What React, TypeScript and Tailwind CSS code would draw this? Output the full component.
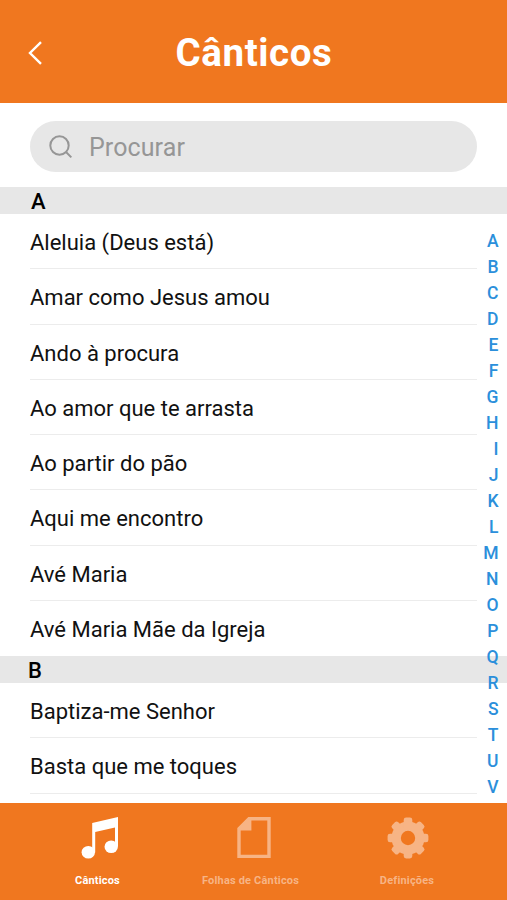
import clsx from 'clsx'

const sections = [
  {
    letter: 'A',
    offset: 'pl-[31px]',
    songs: [
      'Aleluia (Deus está)',
      'Amar como Jesus amou',
      'Ando à procura',
      'Ao amor que te arrasta',
      'Ao partir do pão',
      'Aqui me encontro',
      'Avé Maria',
      'Avé Maria Mãe da Igreja',
    ],
  },
  { letter: 'B', offset: 'pl-[28px]', songs: ['Baptiza-me Senhor', 'Basta que me toques', ''] },
]

const letters = 'ABCDEFGHIJKLMNOPQRSTUV'.split('')

function NotesIcon() {
  return (
    <svg width="38" height="42" viewBox="0 0 38 42" fill="currentColor">
      <path d="M11.2 6 37 0v29.5h-3V10.6L14.2 15V35.5h-3Z" />
      <ellipse cx="7.3" cy="35.2" rx="6.7" ry="6.3" />
      <ellipse cx="30.2" cy="29.7" rx="6.7" ry="6.3" />
    </svg>
  )
}

function SheetIcon() {
  return (
    <svg width="34" height="42" viewBox="0 0 34 42">
      <path d="M12 1.8H32V39.4H2V11.6Z" fill="none" stroke="currentColor" strokeWidth="3.4" />
      <path d="M11.4 1.6H14.4V13.4H1.8V11Z" fill="currentColor" />
    </svg>
  )
}

function GearIcon() {
  return (
    <svg width="42" height="42" viewBox="-21 -21 42 42" fill="currentColor">
      <mask id="hub">
        <rect x="-21" y="-21" width="42" height="42" fill="#fff" />
        <circle r="7.2" fill="#000" />
      </mask>
      <g mask="url(#hub)">
        <circle r="16.6" />
        {[0, 45, 90, 135].map((angle) => (
          <rect key={angle} x="-4.3" y="-20.4" width="8.6" height="40.8" rx="2.4" transform={`rotate(${angle})`} />
        ))}
      </g>
    </svg>
  )
}

const tabs = [
  { label: 'Cânticos', icon: <NotesIcon />, active: true, width: 'w-[195px]', shift: 'pl-[5px]' },
  { label: 'Folhas de Cânticos', icon: <SheetIcon />, active: false, width: 'w-[111px]', shift: 'pl-[6px]' },
  { label: 'Definições', icon: <GearIcon />, active: false, width: 'w-[202px]', shift: 'pl-[2px]' },
]

export default function App() {
  return (
    <div className="flex h-[900px] w-[507px] flex-col overflow-hidden bg-white font-[Roboto,sans-serif] text-[#111]">
      <header className="grid h-[103px] shrink-0 grid-cols-[60px_1fr_60px] items-center bg-[#f0771f] text-white">
        <button className="mt-[3px] pl-7" aria-label="Voltar">
          <svg width="15" height="24" viewBox="0 0 15 24" fill="none" stroke="currentColor" strokeWidth="2.4">
            <path d="M13 1.2 2 12l11 10.8" />
          </svg>
        </button>
        <h1 className="mt-[3px] pl-px text-center text-[38.5px] font-bold tracking-[0.6px]">Cânticos</h1>
      </header>

      <main className="relative flex min-h-0 flex-1 flex-col overflow-hidden">
        <div className="mx-[30px] mt-[18px] mb-[15px] flex h-[51px] shrink-0 items-center rounded-full bg-[#e7e7e7] pl-[19px] text-[#969696]">
          <svg width="24" height="24" viewBox="0 0 24 24" fill="none" stroke="currentColor" strokeWidth="2">
            <circle cx="10.5" cy="10.5" r="9.2" />
            <path d="m17 17 5.3 5.4" />
          </svg>
          <span className="pt-[2px] pl-[16px] text-[25px] tracking-[0.1px]">Procurar</span>
        </div>

        {sections.map((section) => (
          <section key={section.letter} className="shrink-0">
            <h2 className={clsx('flex h-[27px] items-center bg-[#e7e7e7] pt-[2px] text-[22px] font-medium text-black', section.offset)}>
              {section.letter}
            </h2>
            <ul>
              {section.songs.map((song) => (
                <li
                  key={song}
                  className="mx-[30px] flex h-[55.25px] items-center border-b border-[#ececec] pt-[3px] text-[22px] whitespace-nowrap last:border-transparent"
                >
                  {song}
                </li>
              ))}
            </ul>
          </section>
        ))}

        {/* index alphabétique, par-dessus la liste */}
        <nav className="absolute top-[125px] right-[8.5px] flex flex-col items-end text-[17.5px] font-medium text-[#2b8fdb]">
          {letters.map((letter) => (
            <span key={letter} className="h-[26px] leading-[26px]">
              {letter}
            </span>
          ))}
        </nav>
      </main>

      <footer className="flex h-[97px] shrink-0 bg-[#f0771f] text-white">
        {tabs.map((tab) => (
          <div
            key={tab.label}
            className={clsx('flex shrink-0 flex-col items-center pt-[14px]', tab.width, !tab.active && 'text-[#f7b485]')}
          >
            <div className={clsx('flex h-[42px] items-center', tab.shift)}>{tab.icon}</div>
            <span className="mt-[14px] text-[11px] leading-4 font-bold tracking-[0.18px] whitespace-nowrap">{tab.label}</span>
          </div>
        ))}
      </footer>
    </div>
  )
}
